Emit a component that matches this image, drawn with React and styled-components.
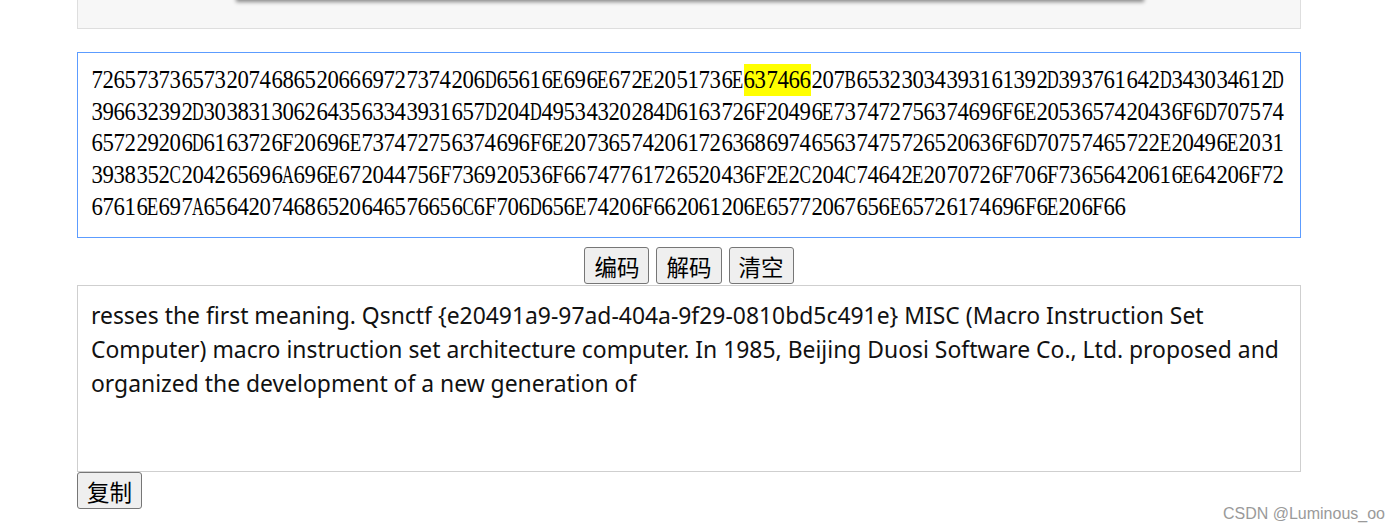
import React from "react";
import styled, { createGlobalStyle } from "styled-components";

const Global = createGlobalStyle`
  html, body { margin: 0; padding: 0; background: #fff; }
  body { font-family: "Liberation Sans", Arial, sans-serif; }
`;

const Page = styled.div`
  position: relative;
  width: 1400px;
  height: 531px;
  overflow: hidden;
`;

const Column = styled.div`
  width: 1224px;
  margin-left: 77px;
  display: flex;
  flex-direction: column;
`;

const TopPanel = styled.div`
  height: 28px;
  background: #f7f7f7;
  border: 1px solid #dedede;
  border-top: none;
  overflow: hidden;
`;

const Sheet = styled.div`
  margin: -30px 0 0 159px;
  width: 906px;
  height: 30px;
  background: #f7f7f7;
  box-shadow: 0 1px 4px 1px rgba(0, 0, 0, 0.45);
`;

const HexBox = styled.div`
  margin-top: 23px;
  height: 186px;
  box-sizing: border-box;
  border: 1px solid #5c9cff;
  padding: 11px 13px;
  font-family: "Liberation Serif", "Times New Roman", serif;
  font-size: 24.5px;
  line-height: 31.7px;
  color: #000;
  overflow: hidden;
`;

const HexLine = styled.div`
  display: flex;
  height: 31.7px;
`;

const Cell = styled.span`
  display: inline-flex;
  justify-content: center;
  width: 11.25px;
  background: ${(p) => (p.$hl ? "#ffff00" : "transparent")};
`;

const Glyph = styled.span`
  display: inline-block;
  transform: scaleX(${(p) => p.$sx});
`;

const ButtonRow = styled.div`
  display: flex;
  justify-content: center;
  gap: 7px;
  margin-top: 9px;
`;

const Btn = styled.button`
  font-family: "Noto Sans CJK SC", sans-serif;
  font-size: 22.5px;
  line-height: 26px;
  height: 37px;
  padding: 0 9px;
  background: #efefef;
  color: #000;
  border: 1px solid #767676;
  border-radius: 3px;
  cursor: pointer;
`;

const OutBox = styled.div`
  margin-top: 1px;
  height: 187px;
  box-sizing: border-box;
  border: 1px solid #cfcfcf;
  padding: 13px 6px 12px 13px;
  font-family: "Noto Sans", "Open Sans", sans-serif;
  font-size: 22.9px;
  line-height: 34px;
  color: #111;
`;

const CopyRow = styled.div`
  display: flex;
`;

const Watermark = styled.div`
  position: absolute;
  right: 15px;
  bottom: 8px;
  font-family: "Liberation Sans", Arial, sans-serif;
  font-size: 16px;
  color: #9a9a9a;
`;

const hexLines = [
  "72657373657320746865206669727374206D65616E696E672E2051736E637466207B65323034393161392D393761642D343034612D",
  "396632392D3038313062643563343931657D204D49534320284D6163726F20496E737472756374696F6E2053657420436F6D707574",
  "657229206D6163726F20696E737472756374696F6E207365742061726368697465637475726520636F6D70757465722E20496E2031",
  "3938352C204265696A696E672044756F736920536F66747761726520436F2E2C204C74642E2070726F706F73656420616E64206F72",
  "67616E697A65642074686520646576656C6F706D656E74206F662061206E65772067656E65726174696F6E206F66",
];

const SCALE = { A: 0.66, B: 0.7, C: 0.7, D: 0.66, E: 0.77, F: 0.84 };
const DIGIT_SCALE = 0.93;

const HL_START = 58;
const HL_END = 64;

const outText =
  "resses the first meaning. Qsnctf {e20491a9-97ad-404a-9f29-0810bd5c491e} MISC (Macro Instruction Set Computer) macro instruction set architecture computer. In 1985, Beijing Duosi Software Co., Ltd. proposed and organized the development of a new generation of";

export default function App() {
  return (
    <Page>
      <Global />
      <Column>
        <TopPanel>
          <Sheet />
        </TopPanel>
        <HexBox>
          {hexLines.map((line, li) => (
            <HexLine key={li}>
              {line.split("").map((ch, i) => (
                <Cell key={i} $hl={li === 0 && i >= HL_START && i < HL_END}>
                  <Glyph $sx={SCALE[ch] || DIGIT_SCALE}>{ch}</Glyph>
                </Cell>
              ))}
            </HexLine>
          ))}
        </HexBox>
        <ButtonRow>
          <Btn>编码</Btn>
          <Btn>解码</Btn>
          <Btn>清空</Btn>
        </ButtonRow>
        <OutBox>{outText}</OutBox>
        <CopyRow>
          <Btn>复制</Btn>
        </CopyRow>
      </Column>
      <Watermark>CSDN @Luminous_oo</Watermark>
    </Page>
  );
}
